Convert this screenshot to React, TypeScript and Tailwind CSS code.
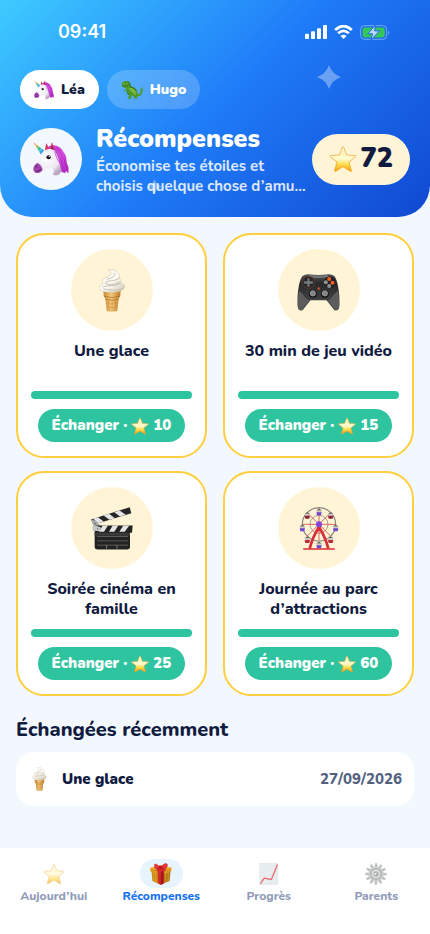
import { useState } from "react";
import type { ComponentType } from "react";

interface IconProps {
  className?: string;
}

type Icon = ComponentType<IconProps>;

function StarIcon({ className }: IconProps) {
  return (
    <svg viewBox="0 0 84 80" className={className} aria-hidden="true">
      <defs>
        <linearGradient id="starFill" x1="0" y1="0" x2="0" y2="1">
          <stop offset="0" stopColor="#fff3b0" />
          <stop offset="0.5" stopColor="#fffbd0" />
          <stop offset="0.72" stopColor="#ffdc4a" />
          <stop offset="1" stopColor="#f59a12" />
        </linearGradient>
        <linearGradient id="starEdge" x1="0" y1="0" x2="0" y2="1">
          <stop offset="0" stopColor="#f3b35c" />
          <stop offset="1" stopColor="#f2a21c" />
        </linearGradient>
      </defs>
      <path
        d="M40.500 3.500Q42 1 43.500 3.500L53 28L79 29.500Q83 30 80 33L60 49L67 74Q67.500 79 64 77L42 63L20 77Q16.500 79 17 74L24 49L4 33Q1 30 5 29.500L31 28Z"
        fill="url(#starFill)"
        stroke="url(#starEdge)"
        strokeWidth="2.500"
        strokeLinejoin="round"
      />
    </svg>
  );
}

function UnicornIcon({ className }: IconProps) {
  return (
    <svg viewBox="0 0 106 100" className={className} aria-hidden="true">
      <defs>
        <linearGradient id="horn" x1="0" y1="0" x2="1" y2="1">
          <stop offset="0" stopColor="#ef5350" />
          <stop offset="0.25" stopColor="#f6b23c" />
          <stop offset="0.45" stopColor="#4fc36b" />
          <stop offset="0.7" stopColor="#2fb4e6" />
          <stop offset="1" stopColor="#5b57d6" />
        </linearGradient>
        <radialGradient id="coat" cx="0.45" cy="0.35" r="0.65">
          <stop offset="0" stopColor="#ffffff" />
          <stop offset="0.7" stopColor="#ece8f2" />
          <stop offset="1" stopColor="#bfa9c4" />
        </radialGradient>
        <linearGradient id="mane" x1="0" y1="0" x2="1" y2="1">
          <stop offset="0" stopColor="#c02fc4" />
          <stop offset="0.5" stopColor="#d44fe0" />
          <stop offset="1" stopColor="#a61fb8" />
        </linearGradient>
      </defs>
      <path
        d="M44 15C60 2 84 14 90 30C102 42 96 58 103 70C106 78 104 86 104 92L97 85L95 91C86 90 78 86 76 74L50 28Z"
        fill="url(#mane)"
      />
      <path d="M1 1L33 25L23 37Z" fill="url(#horn)" />
      <path d="M6 11L11 6M12 20L18 13M18 29L25 19" stroke="#fff" strokeOpacity="0.6" strokeWidth="2" />
      <path
        d="M28 31C36 18 56 16 66 26C74 38 74 52 79 66C82 78 86 84 80 93C74 101 60 99 58 96C64 88 61 80 55 76C45 80 34 77 28 84C20 92 6 94 2 84C-1 74 8 64 14 58C20 50 22 38 28 31Z"
        fill="url(#coat)"
      />
      <path d="M12 62C20 64 27 72 28 83C20 93 6 95 2 84C-1 74 5 68 12 62Z" fill="#a044ad" />
      <path d="M8 71Q11 69 12 74M9 86Q17 87 22 80" fill="none" stroke="#5e1d70" strokeWidth="3" strokeLinecap="round" />
      <path d="M35 24L39 3L48 20Z" fill="#d73a63" />
      <path d="M50 20L56 0L64 24Z" fill="#d73a63" />
      <path d="M53 20L56 8L60 22Z" fill="#8e2147" />
      <path
        d="M58 18C72 26 68 40 78 46C88 54 80 66 92 78M72 20C84 28 82 40 89 46C96 54 91 64 98 74M64 28C68 42 70 52 80 62"
        fill="none"
        stroke="#a526b6"
        strokeWidth="2"
        strokeLinecap="round"
      />
      <ellipse cx="46" cy="45" rx="6.500" ry="6" fill="#1b1420" />
      <circle cx="48" cy="43" r="2" fill="#fff" />
    </svg>
  );
}

function DinoIcon({ className }: IconProps) {
  return (
    <svg viewBox="0 0 68 60" className={className} aria-hidden="true">
      <path
        d="M3 9C5 3 14 0 22 3C28 5 29 12 27 18C36 20 46 24 49 35C53 47 62 43 60 34C59 29 62 24 65 20C70 35 66 50 50 50L49 53L53 56H40L41 50L33 48L30 54L33 57H20L25 47C20 43 17 38 17 32L10 34L9 31L16 28L14 24C8 24 2 20 3 15Z"
        fill="#4f9a2b"
      />
      <path d="M22 24C30 28 30 40 38 46C46 48 48 40 43 31C38 25 30 22 22 24Z" fill="#7cb83a" />
      <path d="M20 3C27 6 30 14 28 20C37 22 44 25 48 33" fill="none" stroke="#256b1a" strokeWidth="3" />
      <path d="M4 16L18 19L24 14M31 37L41 44M18 36L25 45" fill="none" stroke="#245f1c" strokeWidth="2" />
      <circle cx="15" cy="8" r="2" fill="#182b0b" />
      <path d="M6 11Q14 10 22 8" fill="none" stroke="#8cc544" strokeWidth="2" />
    </svg>
  );
}

function IceCreamIcon({ className }: IconProps) {
  return (
    <svg viewBox="0 0 78 130" className={className} aria-hidden="true">
      <defs>
        <linearGradient id="cone" x1="0" y1="0" x2="1" y2="0">
          <stop offset="0" stopColor="#c98a35" />
          <stop offset="0.45" stopColor="#f3c777" />
          <stop offset="1" stopColor="#bd7b2b" />
        </linearGradient>
        <linearGradient id="cream" x1="0" y1="0" x2="1" y2="1">
          <stop offset="0" stopColor="#f3eedf" />
          <stop offset="0.5" stopColor="#fdfcf8" />
          <stop offset="1" stopColor="#cfc7b2" />
        </linearGradient>
      </defs>
      <path d="M13 64H65L64 82L59 90L55 127Q39 132 23 127L19 90L14 82Z" fill="url(#cone)" />
      <path d="M14 82Q39 91 64 82M19 91Q39 98 59 91" fill="none" stroke="#a96d22" strokeWidth="2" />
      <path
        d="M28 94L30 127M39 95V128M50 94L48 127M20 103Q39 108 58 103M22 115Q39 119 56 115"
        fill="none"
        stroke="#bf8434"
        strokeWidth="1"
      />
      <path
        d="M27 2C47 -2 66 11 61 28C68 32 68 39 63 43C76 42 80 53 74 60C64 74 14 74 4 63C-3 55 3 46 13 45C6 38 10 30 19 27C32 24 43 13 27 2Z"
        fill="url(#cream)"
        stroke="#c8bfab"
        strokeWidth="1.500"
      />
      <path
        d="M60 29C48 37 32 34 20 39M63 44C48 53 27 48 11 54M73 58C57 68 31 64 13 60M48 13C49 22 37 28 26 31M19 44C34 49 50 46 61 39"
        fill="none"
        stroke="#bdb39f"
        strokeWidth="2.500"
        strokeLinecap="round"
      />
    </svg>
  );
}

function GamepadIcon({ className }: IconProps) {
  return (
    <svg viewBox="0 0 128 111" className={className} aria-hidden="true">
      <defs>
        <linearGradient id="pad" x1="0" y1="0" x2="0" y2="1">
          <stop offset="0" stopColor="#55565a" />
          <stop offset="0.25" stopColor="#29292b" />
          <stop offset="1" stopColor="#505050" />
        </linearGradient>
      </defs>
      <path
        d="M16 6Q24 0 36 1Q64 5 92 1Q105 0 112 7C122 19 128 60 127 92C127 107 119 113 111 108L88 79H40L17 108C9 113 1 107 1 92C0 60 5 19 16 6Z"
        fill="url(#pad)"
      />
      <path
        d="M5 51C2 70 2 88 3 98C4 108 10 110 16 105L37 79C22 76 18 55 5 51ZM123 51C126 70 126 88 125 98C124 108 118 110 112 105L91 79C106 76 110 55 123 51Z"
        fill="#5c5c5c"
      />
      <path d="M36 2Q64 7 92 2L94 9Q64 15 34 9Z" fill="#747679" />
      <circle cx="34" cy="25" r="18" fill="#292829" stroke="#754027" strokeWidth="2" />
      <path d="M30 12H38V21H48V30H38V39H30V30H20V21H30Z" fill="#737779" stroke="#151515" />
      <circle cx="98" cy="25" r="18" fill="#202021" />
      <circle cx="96" cy="15" r="6" fill="#f4601b" />
      <circle cx="106" cy="26" r="6" fill="#f4601b" />
      <circle cx="86" cy="25" r="6" fill="#929495" />
      <circle cx="96" cy="36" r="6" fill="#929495" />
      <circle cx="47" cy="59" r="12" fill="#161617" />
      <circle cx="83" cy="59" r="12" fill="#161617" />
      <circle cx="47" cy="58" r="8" fill="#818486" stroke="#aeb0b1" strokeWidth="2" />
      <circle cx="83" cy="58" r="8" fill="#818486" stroke="#aeb0b1" strokeWidth="2" />
      <circle cx="65" cy="44" r="4" fill="#b34c24" />
    </svg>
  );
}

function ClapperIcon({ className }: IconProps) {
  return (
    <svg viewBox="0 0 126 128" className={className} aria-hidden="true">
      <path d="M0 37L116 0L121 18L7 53Z" fill="#262626" />
      <path d="M6 35L21 30L38 43L22 48ZM38 25L54 20L72 33L55 38ZM70 15L86 10L104 23L87 28Z" fill="#e4e4e4" />
      <path d="M7 53L2 38L17 43L31 59L27 71L5 69Z" fill="#a8aaaa" stroke="#e4e4e4" />
      <path d="M10 55H125L123 77H117V119Q117 127 108 127H20Q11 127 11 119V74Z" fill="#222" />
      <path d="M35 55H51L39 74H24ZM65 55H82L70 74H54ZM97 55H115L101 74H85Z" fill="#e4e4e4" />
      <path d="M6 53L29 60V72L5 71Z" fill="#c4c6c6" />
      <circle cx="12" cy="49" r="2" fill="#555" />
      <circle cx="20" cy="65" r="2" fill="#555" />
      <path d="M11 77H117V86H11Z" fill="#393939" />
      <path d="M18 88H111M18 101H111M18 114H111" stroke="#777" strokeWidth="2" />
      <path d="M47 115V124M78 115V124" stroke="#bababa" strokeWidth="2" />
    </svg>
  );
}

const cabins = [
  { x: 59, y: 16, color: "#7045cf" },
  { x: 94, y: 26, color: "#8f2536" },
  { x: 109, y: 64, color: "#7045cf" },
  { x: 94, y: 99, color: "#b82d38" },
  { x: 59, y: 115, color: "#7045cf" },
  { x: 24, y: 99, color: "#b82d38" },
  { x: 9, y: 64, color: "#7045cf" },
  { x: 24, y: 26, color: "#8f2536" },
];

function FerrisWheelIcon({ className }: IconProps) {
  return (
    <svg viewBox="0 0 118 129" className={className} aria-hidden="true">
      <circle cx="59" cy="52" r="50" fill="none" stroke="#85847d" strokeWidth="3.500" />
      <circle cx="59" cy="52" r="27" fill="none" stroke="#918f87" strokeWidth="2.500" />
      <path d="M59 3V101M10 52H108M24 17L94 87M94 17L24 87" stroke="#d3474c" strokeWidth="2.500" />
      {cabins.map(({ x, y, color }) => (
        <g key={`${x}-${y}`}>
          <path d={`M${x - 8} ${y - 4}Q${x} ${y - 17} ${x + 8} ${y - 4}Z`} fill="#68665f" />
          <rect x={x - 7} y={y - 6} width="14" height="7" fill="#cfc6c4" />
          <path d={`M${x - 8} ${y}H${x + 8}L${x + 6} ${y + 9}H${x - 6}Z`} fill={color} />
        </g>
      ))}
      <path d="M59 61C47 79 37 101 31 125M59 61C71 79 81 101 87 125" fill="none" stroke="#d82c36" strokeWidth="8" />
      <path d="M59 52L75 82L66 77Q59 67 52 77L43 82Z" fill="#dc303b" />
      <path d="M13 126H105" stroke="#d82c36" strokeWidth="4" strokeLinecap="round" />
      <circle cx="59" cy="52" r="9" fill="#8348db" />
    </svg>
  );
}

function GiftIcon({ className }: IconProps) {
  return (
    <svg viewBox="0 0 64 64" className={className} aria-hidden="true">
      <path d="M4 21L31 28V63L7 52Z" fill="#c98a15" />
      <path d="M31 28L60 21L57 52L31 63Z" fill="#b57510" />
      <path d="M1 14L31 6L63 14L61 25L31 34L2 25Z" fill="#f0b12c" />
      <path d="M2 15L31 23L62 15L61 25L31 34L2 25Z" fill="#d6931d" />
      <path d="M11 22V54M17 24V57M46 26V56M53 23V54" stroke="#e9b23d" strokeWidth="1.500" />
      <path d="M22 21L40 20L39 60L31 63L23 59Z" fill="#d42a2b" />
      <path d="M32 26L40 22L39 60L31 63Z" fill="#a91420" />
      <path d="M13 12L43 22M49 11L22 21" stroke="#d42a2b" strokeWidth="5" />
      <path d="M30 15C22 1 11 0 13 8C14 15 22 19 30 15ZM32 15C35 1 51 -2 51 6C51 14 41 18 32 15Z" fill="#e7393a" stroke="#ad1724" />
      <path d="M29 14L16 20L20 23L31 17L45 22L48 17L34 13Z" fill="#d9272f" />
      <rect x="25" y="8" width="12" height="10" rx="3" fill="#c31527" />
    </svg>
  );
}

function ChartIcon({ className }: IconProps) {
  return (
    <svg viewBox="0 0 64 64" className={className} aria-hidden="true">
      <rect x="5" y="1" width="53" height="62" fill="#d8e0e4" stroke="#bcc9cf" />
      <path d="M15 2V62M25 2V62M35 2V62M45 2V62M6 12H57M6 22H57M6 32H57M6 42H57M6 52H57" stroke="#e4eaed" />
      <path d="M8 59L18 44L39 48L56 6" fill="none" stroke="#df0f1b" strokeWidth="4" strokeLinejoin="round" strokeLinecap="round" />
    </svg>
  );
}

function GearIcon({ className }: IconProps) {
  const teeth = [0, 30, 60, 90, 120, 150, 180, 210, 240, 270, 300, 330];
  return (
    <svg viewBox="0 0 64 64" className={className} aria-hidden="true">
      {teeth.map((angle) => (
        <path key={angle} d="M28 13L30 1L35 1L36 13Z" fill="#8a8c8e" stroke="#b6b7b8" transform={`rotate(${angle} 32 32)`} />
      ))}
      <circle cx="32" cy="32" r="22" fill="#8b8e90" />
      <circle cx="32" cy="32" r="20" fill="none" stroke="#b7babc" strokeWidth="3" />
      <circle cx="32" cy="32" r="10" fill="#8f9192" stroke="#dedfdf" strokeWidth="3" />
      <path d="M29 27L36 32L31 37" fill="none" stroke="#54575a" strokeWidth="3" />
      <circle cx="31" cy="31" r="3" fill="#f7f7f7" />
    </svg>
  );
}

function Sparkle({ className }: IconProps) {
  return (
    <svg viewBox="0 0 24 24" className={className} aria-hidden="true">
      <path d="M12 0Q15 9 24 12Q15 15 12 24Q9 15 0 12Q9 9 12 0Z" fill="currentColor" />
    </svg>
  );
}

function StatusBar() {
  return (
    <div className="flex h-8 items-center justify-between pl-[38px] pr-5 text-white">
      <span className="font-['Inter',sans-serif] text-[18px] font-semibold leading-6">09:41</span>
      <div className="flex items-center gap-[7px]">
        <svg viewBox="0 0 66 42" className="h-[14px] w-[22px]" fill="currentColor" aria-hidden="true">
          <rect x="0" y="26" width="12" height="16" rx="3" />
          <rect x="18" y="19" width="12" height="23" rx="3" />
          <rect x="36" y="10" width="12" height="32" rx="3" />
          <rect x="54" y="0" width="12" height="42" rx="3" />
        </svg>
        <svg viewBox="0 0 56 42" className="h-[14px] w-[19px]" fill="none" stroke="currentColor" aria-hidden="true">
          <path d="M3 15Q28 -9 53 15" strokeWidth="8" />
          <path d="M12 25Q28 10 44 25" strokeWidth="8" />
          <path d="M19 33Q28 25 37 33L28 42Z" fill="currentColor" stroke="none" />
        </svg>
        <svg viewBox="0 0 92 46" className="h-[15px] w-[30px]" aria-hidden="true">
          <rect x="2" y="2" width="80" height="42" rx="12" fill="none" stroke="#fff" strokeOpacity="0.4" strokeWidth="3" />
          <rect x="8" y="8" width="68" height="30" rx="7" fill="#35c759" />
          <path d="M87 16Q92 23 87 30Z" fill="#fff" fillOpacity="0.5" />
          <path d="M47 0L24 27H38L34 46L60 18H45Z" fill="#b8d9fb" stroke="#1b67e7" strokeWidth="3" />
        </svg>
      </div>
    </div>
  );
}

const children: { name: string; icon: Icon; iconClass: string }[] = [
  { name: "Léa", icon: UnicornIcon, iconClass: "h-5 w-5" },
  { name: "Hugo", icon: DinoIcon, iconClass: "h-5 w-[22px]" },
];

function Header() {
  const [selected, setSelected] = useState("Léa");

  return (
    <header className="relative rounded-b-[32px] bg-[linear-gradient(135deg,#3ecbff_0%,#1f7cf8_50%,#1048d2_100%)] px-5 pb-[21px] pt-4">
      <Sparkle className="absolute right-[89px] top-[65px] h-6 w-6 text-white/35" />
      <Sparkle className="absolute left-[147px] top-[179px] h-[15px] w-[15px] text-white/35" />
      <StatusBar />
      <div className="mt-[22px] flex gap-2">
        {children.map(({ name, icon: ChildIcon, iconClass }) => (
          <button
            key={name}
            type="button"
            aria-pressed={selected === name}
            onClick={() => setSelected(name)}
            className={`flex h-[39px] items-center gap-[7px] rounded-full px-[14px] text-[14px] font-black ${
              selected === name ? "bg-white text-[#111b40]" : "bg-white/20 text-white"
            }`}>
            <ChildIcon className={iconClass} />
            {name}
          </button>
        ))}
      </div>

      <div className="relative mt-[13px] flex items-center">
        <div className="flex h-[62px] w-[62px] shrink-0 items-center justify-center rounded-full bg-[#f3f8ff]">
          <UnicornIcon className="h-[34px] w-9" />
        </div>
        <div className="ml-[14px] min-w-0 flex-1">
          <h1 className="text-[25px] font-black leading-[34px] text-white">Récompenses</h1>
          <p className="text-[15px] font-bold leading-5 text-white/85">
            Économise tes étoiles et choisis quelque chose d’amu…
          </p>
        </div>
        <div className="flex h-[51px] shrink-0 items-center gap-1 rounded-full bg-[#fff5d6] px-[17px] text-[#111b40]">
          <StarIcon className="h-7 w-7" />
          <span className="text-[27px] font-black leading-8">72</span>
        </div>
      </div>
    </header>
  );
}

interface Reward {
  title: string;
  cost: number;
  icon: Icon;
  iconClass: string;
}

const rewards: Reward[] = [
  { title: "Une glace", cost: 10, icon: IceCreamIcon, iconClass: "h-[43px] w-[26px]" },
  { title: "30 min de jeu vidéo", cost: 15, icon: GamepadIcon, iconClass: "mt-1 h-[37px] w-[43px]" },
  { title: "Soirée cinéma en famille", cost: 25, icon: ClapperIcon, iconClass: "h-[43px] w-[42px]" },
  { title: "Journée au parc d’attractions", cost: 60, icon: FerrisWheelIcon, iconClass: "h-[43px] w-10" },
];

function RewardCard({ title, cost, icon: RewardIcon, iconClass }: Reward) {
  return (
    <article className="flex flex-col items-center rounded-[28px] border-2 border-[#ffcf3f] bg-white px-[13px] py-[14px]">
      <div className="flex h-[82px] w-[82px] items-center justify-center rounded-full bg-[#fff5d6]">
        <RewardIcon className={iconClass} />
      </div>
      <h2 className="mt-[10px] min-h-10 text-center text-[16px] font-extrabold leading-5">{title}</h2>
      <div className="mt-[10px] h-2 w-full rounded-full bg-[#2ec4a0]" />
      <button
        type="button"
        className="mt-[10px] flex h-[33px] items-center gap-1 rounded-full bg-[#2ec4a0] px-[14px] text-[15px] font-black text-white">
        <span>Échanger ·</span>
        <StarIcon className="h-[18px] w-[18px]" />
        <span>{cost}</span>
      </button>
    </article>
  );
}

const tabs: { label: string; icon: Icon }[] = [
  { label: "Aujourd’hui", icon: StarIcon },
  { label: "Récompenses", icon: GiftIcon },
  { label: "Progrès", icon: ChartIcon },
  { label: "Parents", icon: GearIcon },
];

function TabBar() {
  const [active, setActive] = useState("Récompenses");

  return (
    <nav className="grid grid-cols-4 bg-white pb-[30px] pt-[11px]">
      {tabs.map(({ label, icon: TabIcon }) => (
        <button
          key={label}
          type="button"
          aria-current={active === label ? "page" : undefined}
          onClick={() => setActive(label)}
          className="flex flex-col items-center">
          <span
            className={`flex h-[29px] w-[43px] items-center justify-center rounded-full ${
              active === label ? "bg-[#e7f3ff]" : "opacity-60"
            }`}>
            <TabIcon className="h-[22px] w-[22px]" />
          </span>
          <span className={`text-[12px] font-extrabold leading-4 ${active === label ? "text-[#1672ee]" : "text-[#929cba]"}`}>
            {label}
          </span>
        </button>
      ))}
    </nav>
  );
}

export default function App() {
  return (
    <div className="flex min-h-screen flex-col bg-[#f3f8ff] font-['Nunito','Lato',sans-serif] text-[#111b40]">
      <Header />
      <main className="flex-1 px-4 pt-4">
        <div className="grid grid-cols-2 gap-x-4 gap-y-[13px]">
          {rewards.map((reward) => (
            <RewardCard key={reward.title} {...reward} />
          ))}
        </div>
        <section className="mt-5">
          <h2 className="text-[20px] font-extrabold leading-7">Échangées récemment</h2>
          <div className="mt-2 flex h-[54px] items-center rounded-[18px] bg-white px-3 text-[15px]">
            <IceCreamIcon className="ml-1 h-6 w-[15px]" />
            <span className="ml-[15px] font-black">Une glace</span>
            <time dateTime="2026-09-27" className="ml-auto font-extrabold text-[#53617f]">
              27/09/2026
            </time>
          </div>
        </section>
      </main>
      <TabBar />
    </div>
  );
}
